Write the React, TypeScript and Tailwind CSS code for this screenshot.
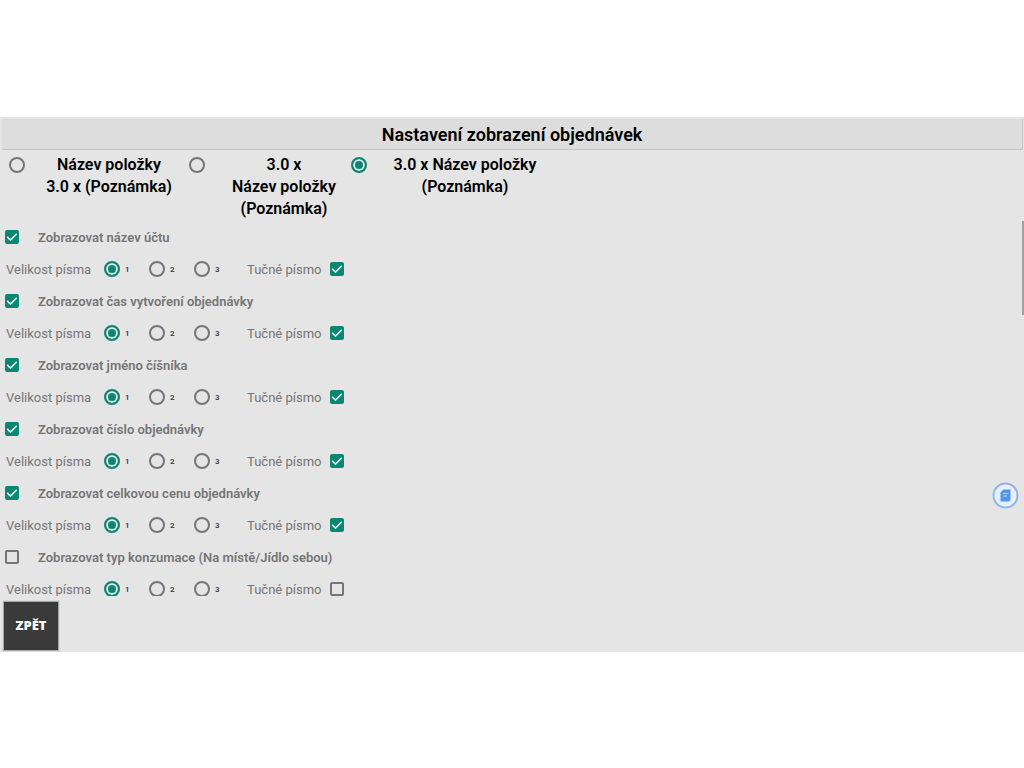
import React, { useState } from 'react';

type LayoutOption = {
  id: string;
  lines: string[];
  className: string;
};

interface DisplayField {
  id: string;
  label: string;
  visible: boolean;
  fontSize: number;
  bold: boolean;
}

const layoutOptions: LayoutOption[] = [
  { id: 'name-first', lines: ['Název položky', '3.0 x (Poznámka)'], className: 'ml-1 w-40' },
  { id: 'count-first', lines: ['3.0 x', 'Název položky', '(Poznámka)'], className: 'ml-3 w-[134px]' },
  { id: 'inline', lines: ['3.0 x Název položky', '(Poznámka)'], className: 'ml-3 w-[172px]' },
];

const initialFields: DisplayField[] = [
  { id: 'account', label: 'Zobrazovat název účtu', visible: true, fontSize: 1, bold: true },
  { id: 'created', label: 'Zobrazovat čas vytvoření objednávky', visible: true, fontSize: 1, bold: true },
  { id: 'waiter', label: 'Zobrazovat jméno číšníka', visible: true, fontSize: 1, bold: true },
  { id: 'number', label: 'Zobrazovat číslo objednávky', visible: true, fontSize: 1, bold: true },
  { id: 'total', label: 'Zobrazovat celkovou cenu objednávky', visible: true, fontSize: 1, bold: true },
  { id: 'type', label: 'Zobrazovat typ konzumace (Na místě/Jídlo sebou)', visible: false, fontSize: 1, bold: false },
];

interface RadioProps {
  id: string;
  name: string;
  checked: boolean;
  onChange: () => void;
}

const Radio: React.FC<RadioProps> = ({ id, name, checked, onChange }) => (
  <input
    id={id}
    type="radio"
    name={name}
    checked={checked}
    onChange={onChange}
    className="size-4 shrink-0 appearance-none rounded-full border-2 border-[#757575] checked:border-[#0b8672] checked:bg-[#0b8672] checked:shadow-[inset_0_0_0_2px_#e5e5e5]"
  />
);

interface CheckboxProps {
  id: string;
  checked: boolean;
  onChange: () => void;
}

const Checkbox: React.FC<CheckboxProps> = ({ id, checked, onChange }) => (
  <span className="grid shrink-0">
    <input
      id={id}
      type="checkbox"
      checked={checked}
      onChange={onChange}
      className="col-start-1 row-start-1 size-3.5 appearance-none rounded-xs border-2 border-[#757575] checked:border-[#0b8672] checked:bg-[#0b8672]"
    />
    {checked && (
      <svg viewBox="0 0 15 15" className="pointer-events-none col-start-1 row-start-1 size-3.5" fill="none">
        <path d="M2.4 7.4 L5.9 10.8 L12.6 4.1" stroke="#e5f5f2" strokeWidth="1.6" />
      </svg>
    )}
  </span>
);

const App: React.FC = () => {
  const [layout, setLayout] = useState('inline');
  const [fields, setFields] = useState(initialFields);

  const updateField = (id: string, patch: Partial<DisplayField>) => {
    setFields((prev) => prev.map((f) => (f.id === id ? { ...f, ...patch } : f)));
  };

  return (
    <div className="min-h-screen bg-white py-[117px] font-[Roboto,sans-serif]">
      <main className="relative bg-[#e5e5e5] pt-0.5 pb-0.5">
        <h1 className="mr-px ml-0.5 border-r border-b border-[#c4c4c4] bg-[#dddddd] pt-0.5 text-center text-lg leading-7 font-semibold text-black">
          Nastavení zobrazení objednávek
        </h1>

        <div className="relative h-[446px] overflow-hidden pt-[3px]">
          <div className="flex h-[68px] items-start pl-[9px]">
            {layoutOptions.map((option) => (
              <div key={option.id} className="flex items-start">
                <span className="flex pt-1">
                  <Radio
                    id={option.id}
                    name="layout"
                    checked={layout === option.id}
                    onChange={() => setLayout(option.id)}
                  />
                </span>
                <label
                  htmlFor={option.id}
                  className={`pt-px text-center text-base leading-[22px] font-semibold text-black ${option.className}`}
                >
                  {option.lines.map((line) => (
                    <span key={line} className="block">{line}</span>
                  ))}
                </label>
              </div>
            ))}
          </div>

          {fields.map((field) => (
            <section key={field.id} className="text-[13px] text-[#757575]">
              <div className="flex h-8 items-center gap-[19px] pl-[5px]">
                <Checkbox
                  id={`${field.id}-visible`}
                  checked={field.visible}
                  onChange={() => updateField(field.id, { visible: !field.visible })}
                />
                <label htmlFor={`${field.id}-visible`} className="pt-0.5 font-semibold">{field.label}</label>
              </div>
              <div className="flex h-8 items-center pl-1.5">
                <span className="w-[98px] pt-0.5">Velikost písma</span>
                {[1, 2, 3].map((size) => (
                  <span key={size} className="flex w-[45px] items-center gap-[5px]">
                    <Radio
                      id={`${field.id}-size-${size}`}
                      name={`${field.id}-size`}
                      checked={field.fontSize === size}
                      onChange={() => updateField(field.id, { fontSize: size })}
                    />
                    <label htmlFor={`${field.id}-size-${size}`} className="pt-0.5 text-[8px] font-medium text-[#333333]">
                      {size}
                    </label>
                  </span>
                ))}
                <label htmlFor={`${field.id}-bold`} className="ml-2 w-[83px] pt-0.5">Tučné písmo</label>
                <Checkbox
                  id={`${field.id}-bold`}
                  checked={field.bold}
                  onChange={() => updateField(field.id, { bold: !field.bold })}
                />
              </div>
            </section>
          ))}

          {/* Scroll thumb */}
          <div className="absolute top-[71px] right-0 h-[94px] w-0.5 bg-[#a0a0a0]" />
        </div>

        <button
          type="button"
          className="mt-1.5 ml-1 block h-12 w-[54px] bg-[#3a3a3a] font-['Open_Sans',sans-serif] text-[13px] font-extrabold text-white shadow-[0_0_1px_1px_#a8a8a8]"
        >
          ZPĚT
        </button>

        {/* Floating notes button */}
        <button type="button" aria-label="Poznámky" className="absolute top-[365px] right-[5px]">
          <svg viewBox="0 0 27 27" className="size-[27px]" fill="none">
            <defs>
              <linearGradient id="ring" x1="0" y1="1" x2="1" y2="0">
                <stop offset="0" stopColor="#7cc4f0" />
                <stop offset="1" stopColor="#aaa2dc" />
              </linearGradient>
            </defs>
            <circle cx="13.5" cy="13.5" r="12" fill="#e6effa" />
            <circle cx="13.5" cy="13.5" r="12" stroke="url(#ring)" strokeWidth="2" />
            <path d="M11.5 7.5h7v10.5l-1.5 1.5h-8.500v-9z" fill="#4d97ec" />
            <path d="M11 11.5h5.500M11 14h4" stroke="#b9d9fa" strokeWidth="1" />
          </svg>
        </button>
      </main>
    </div>
  );
};

export default App;
